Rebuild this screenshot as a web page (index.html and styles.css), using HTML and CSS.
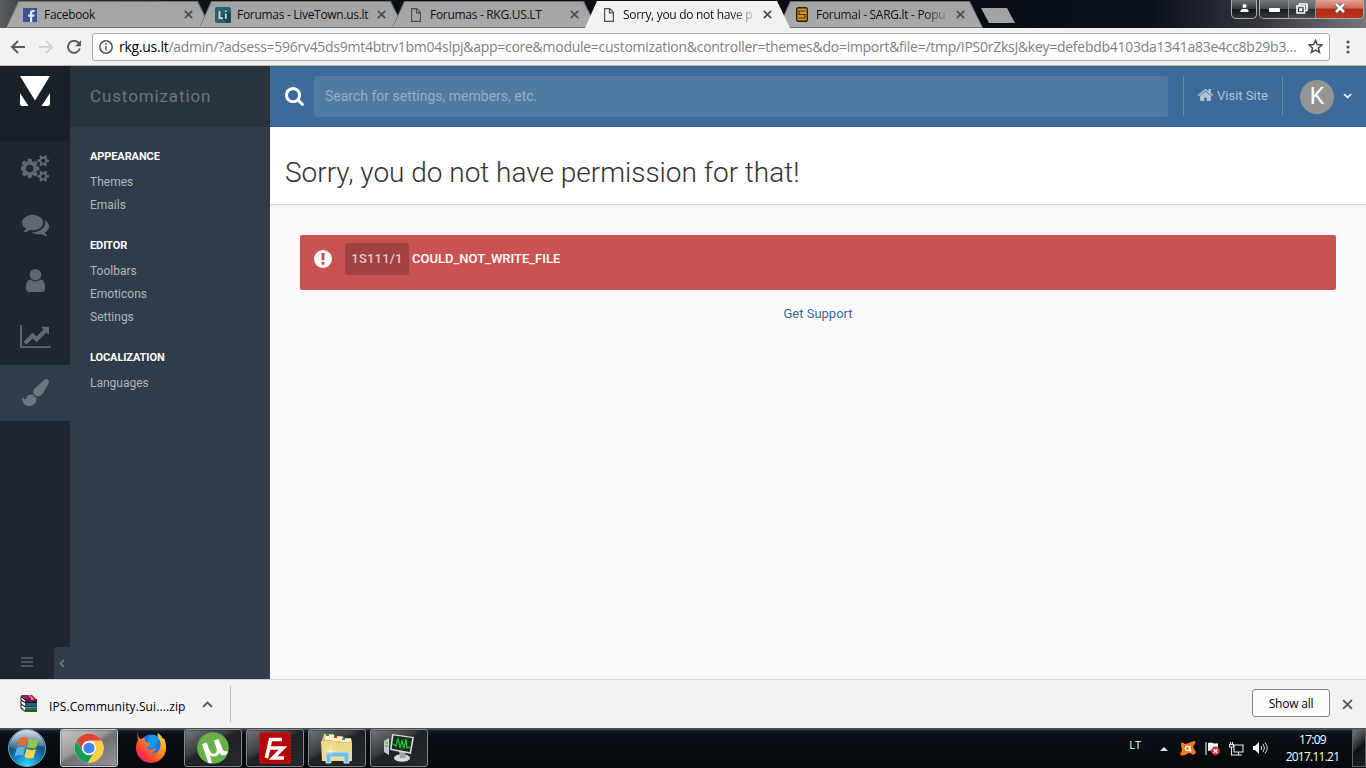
FILE: index.html
```
<!DOCTYPE html>
<html lang="en">
<head>
	<meta charset="utf-8">
	<title>Sorry, you do not have permission for that!</title>
	<link rel="stylesheet" href="styles.css">
</head>
<body>
<div class="desktop">
	<div class="tabstrip">
		<div class="tab">
			<svg class="favicon" viewBox="0 0 14 14"><rect width="14" height="14" fill="#3c5392"/><path d="M9.2 14V8.8h2l.4-2.2H9.2V5.2c0-.8.4-1.2 1.2-1.2h1.3V2h-2C7.800 2 7 3.200 7 4.800v1.800H5.200v2.200H7V14z" fill="#e8ebf2"/></svg>
			<span class="tab-title">Facebook</span>
			<svg class="close" viewBox="0 0 9 9"><path d="M.8.8l7.400 7.400M8.200.8L.8 8.200"/></svg>
		</div>
		<div class="tab">
			<svg class="favicon big" viewBox="0 0 16 16"><rect width="16" height="16" rx="2" fill="#28616d"/><path d="M4 12h4l4 4h3l1-1V7l-4-3z" fill="#194851"/><path d="M4.500 4v7.200H8M10.800 6.500v5.200M10.800 3.500v1.600" fill="none" stroke="#c9dade" stroke-width="1.800"/></svg>
			<span class="tab-title">Forumas - LiveTown.us.lt</span>
			<svg class="close" viewBox="0 0 9 9"><path d="M.8.8l7.400 7.400M8.200.8L.8 8.200"/></svg>
		</div>
		<div class="tab">
			<svg class="favicon page" viewBox="0 0 10 14"><path d="M.6.6h5.200l3.600 3.800v9H.6zM5.500.8v4h4"/></svg>
			<span class="tab-title">Forumas - RKG.US.LT</span>
			<svg class="close" viewBox="0 0 9 9"><path d="M.8.8l7.400 7.400M8.200.8L.8 8.200"/></svg>
		</div>
		<div class="tab active">
			<svg class="favicon page" viewBox="0 0 10 14"><path d="M.6.6h5.200l3.600 3.800v9H.6zM5.500.8v4h4"/></svg>
			<span class="tab-title fade">Sorry, you do not have p</span>
			<svg class="close" viewBox="0 0 9 9"><path d="M.8.8l7.400 7.400M8.200.8L.8 8.200"/></svg>
		</div>
		<div class="tab">
			<svg class="favicon sarg" viewBox="0 0 12 15"><rect x=".7" y=".7" width="10.600" height="13.600" rx="1.500" fill="#d8941c" stroke="#2a2115" stroke-width="1.400"/><path d="M9.500 4H3v3.500h6V11H2.500" fill="none" stroke="#4d3408" stroke-width="1.200"/></svg>
			<span class="tab-title fade">Forumai - SARG.lt - Popu</span>
			<svg class="close" viewBox="0 0 9 9"><path d="M.8.8l7.400 7.400M8.200.8L.8 8.200"/></svg>
		</div>
		<div class="newtab"></div>
		<div class="winbuttons">
			<div class="wb user"><svg viewBox="0 0 10 10"><circle cx="5" cy="2.800" r="2.300"/><path d="M.5 9.500V8q0-2 3-2h3q3 0 3 2v1.500z"/></svg></div>
			<div class="wb group">
				<span class="min"><i></i></span>
				<span class="max"><svg viewBox="0 0 12 11"><path d="M3.500 3V1H11v6.500H9M1 3h7.500v7H1zM4 6h1.500v1.500H4z"/></svg></span>
				<span class="x"><svg viewBox="0 0 12 10"><path class="edge" d="M2 1l8 8M10 1L2 9"/><path d="M2 1l8 8M10 1L2 9"/></svg></span>
			</div>
		</div>
	</div>

	<div class="toolbar">
		<svg class="nav back" viewBox="0 0 16 14"><path d="M15 7H2M8 1L2 7l6 6"/></svg>
		<svg class="nav forward" viewBox="0 0 16 14"><path d="M1 7h13M8 1l6 6-6 6"/></svg>
		<svg class="nav reload" viewBox="0 0 14 14"><path d="M11.800 3.200A6 6 0 1 0 12.800 8.500"/><path class="tip" d="M14 .2v6H8z"/></svg>
		<div class="address">
			<svg class="info" viewBox="0 0 14 14"><circle cx="7" cy="7" r="6.200"/><path d="M7 6v4.600M7 3.200v1.700"/></svg>
			<span class="url"><b>rkg.us.lt</b>/admin/?adsess=596rv45ds9mt4btrv1bm04slpj&amp;app=core&amp;module=customization&amp;controller=themes&amp;do=import&amp;file=/tmp/IPS0rZksJ&amp;key=defebdb4103da1341a83e4cc8b29b3...</span>
			<svg class="star" viewBox="0 0 14 14"><path d="M7 1.300l1.700 3.900 4.300.4-3.200 2.800 1 4.200L7 10.400l-3.800 2.200 1-4.200L1 5.600l4.300-.4z"/></svg>
		</div>
		<svg class="dots" viewBox="0 0 4 14"><circle cx="2" cy="2" r="1.600"/><circle cx="2" cy="7" r="1.600"/><circle cx="2" cy="12" r="1.600"/></svg>
	</div>

	<div class="app">
		<div class="rail">
			<div class="logo"><svg viewBox="0 0 30 30"><path d="M0 0h30L15 24.500zM0 17l8.500 13H2q-2 0-2-2zM30 17l-8.500 13H28q2 0 2-2z"/></svg></div>
			<a class="rail-item"><svg width="29" height="27" viewBox="0 0 1920 1792"><path d="M832 896q0-106-75-181t-181-75-181 75-75 181 75 181 181 75 181-75 75-181zm768 512q0-52-38-90t-90-38-90 38-38 90q0 53 37.500 90.500t90.500 37.500 90.500-37.500 37.500-90.500zm0-1024q0-52-38-90t-90-38-90 38-38 90q0 53 37.500 90.500t90.500 37.500 90.500-37.500 37.500-90.500zm-384 421v185q0 10-7 19.500t-16 10.500l-155 24q-11 35-32 76 34 48 90 115 7 11 7 20 0 12-7 19-23 30-82.500 89.500t-78.500 59.500q-11 0-21-7l-115-90q-37 19-77 31-11 108-23 155-7 24-30 24h-186q-11 0-20-7.500t-10-17.500l-23-153q-34-10-75-31l-118 89q-7 7-20 7-11 0-21-8-144-133-144-160 0-9 7-19 10-14 41-53t47-61q-23-44-35-82l-152-24q-10-1-17-9.500t-7-19.500v-185q0-10 7-19.500t16-10.500l155-24q11-35 32-76-34-48-90-115-7-11-7-20 0-12 7-20 22-30 82-89t79-59q11 0 21 7l115 90q34-18 77-32 11-108 23-154 7-24 30-24h186q11 0 20 7.500t10 17.500l23 153q34 10 75 31l118-89q8-7 20-7 11 0 21 8 144 133 144 160 0 8-7 19-12 16-42 54t-45 60q23 48 34 82l152 23q10 2 17 10.500t7 19.500zm640 533v140q0 16-149 31-12 27-30 52 51 113 51 138 0 4-4 7-122 71-124 71-8 0-46-47t-52-68q-20 2-30 2t-30-2q-14 21-52 68t-46 47q-2 0-124-71-4-3-4-7 0-25 51-138-18-25-30-52-149-15-149-31v-140q0-16 149-31 13-29 30-52-51-113-51-138 0-4 4-7 4-2 35-20t59-34 30-16q8 0 46 46.500t52 67.500q20-2 30-2t30 2q51-71 92-112l6-2q4 0 124 70 4 3 4 7 0 25-51 138 17 23 30 52 149 15 149 31zm0-1024v140q0 16-149 31-12 27-30 52 51 113 51 138 0 4-4 7-122 71-124 71-8 0-46-47t-52-68q-20 2-30 2t-30-2q-14 21-52 68t-46 47q-2 0-124-71-4-3-4-7 0-25 51-138-18-25-30-52-149-15-149-31v-140q0-16 149-31 13-29 30-52-51-113-51-138 0-4 4-7 4-2 35-20t59-34 30-16q8 0 46 46.500t52 67.500q20-2 30-2t30 2q51-71 92-112l6-2q4 0 124 70 4 3 4 7 0 25-51 138 17 23 30 52 149 15 149 31z"/></svg></a>
			<a class="rail-item"><svg width="27" height="27" viewBox="0 0 1792 1792"><path d="M1408 768q0 139-94 257t-256.500 186.500-353.500 68.500q-86 0-176-16-124 88-278 128-36 9-86 16h-3q-11 0-20.500-8t-11.500-21q-1-3-1-6.500t.5-6.500 2-6l2.500-5 3.500-5.500 4-5 4.500-5 4-4.500q5-6 23-25t26-29.500 22.500-29 25-38.500 20.500-44q-124-72-195-177t-71-224q0-139 94-257t256.500-186.500 353.500-68.500 353.500 68.500 256.500 186.500 94 257zm384 256q0 120-71 224.500t-195 176.500q10 24 20.500 44t25 38.500 22.500 29 26 29.500 23 25q1 1 4 4.500t4.500 5 4 5 3.500 5.500l2.500 5 2 6 .5 6.500-1 6.500q-3 14-13 22t-22 7q-50-7-86-16-154-40-278-128-90 16-176 16-271 0-472-132 58 4 88 4 161 0 309-45t264-129q125-92 192-212t67-254q0-77-23-152 129 71 204 178t75 230z"/></svg></a>
			<a class="rail-item"><svg width="27" height="27" viewBox="0 0 1792 1792"><path d="M1536 1399q0 109-62.500 187t-150.500 78h-854q-88 0-150.500-78t-62.500-187q0-85 8.500-160.500t31.500-152 58.500-131 94-89 134.500-34.500q131 128 313 128t313-128q76 0 134.500 34.500t94 89 58.500 131 31.500 152 8.500 160.500zm-256-887q0 159-112.500 271.500t-271.500 112.500-271.500-112.500-112.500-271.500 112.500-271.500 271.500-112.500 271.500 112.500 112.500 271.500z"/></svg></a>
			<a class="rail-item"><svg width="31" height="27" viewBox="0 0 2048 1792"><path d="M2048 1536v128h-2048v-1536h128v1408h1920zm-128-1248v435q0 21-19.500 29.500t-35.500-7.500l-121-121-633 633q-10 10-23 10t-23-10l-233-233-416 416-192-192 585-585q10-10 23-10t23 10l233 233 464-464-121-121q-16-16-7.500-35.500t29.500-19.500h435q14 0 23 9t9 23z"/></svg></a>
			<a class="rail-item selected"><svg width="27" height="27" viewBox="0 0 1792 1792"><path d="M1615 0q70 0 122.500 46.500t52.500 116.500q0 63-45 151-332 629-465 752-97 91-218 91-126 0-216.500-92.500t-90.500-219.500q0-128 92-212l638-579q59-54 130-54zm-909 1034q39 76 106.500 130t150.500 76l1 71q4 213-129.500 347t-348.500 134q-123 0-218-46.500t-152.500-127.500-86.500-183-29-220q7 5 41 30t62 44.500 59 36.500 46 17q41 0 55-37 25-66 57.500-112.500t69.500-76 88-47.500 103-25.500 125-10.500z"/></svg></a>
			<div class="rail-foot">
				<div class="reorder"><i></i><i></i><i></i></div>
				<div class="collapse"><svg viewBox="0 0 6 9"><path d="M5 1L1.500 4.500 5 8"/></svg></div>
			</div>
		</div>

		<div class="submenu">
			<div class="submenu-head">Customization</div>
			<h3>APPEARANCE</h3>
			<ul>
				<li><a>Themes</a></li>
				<li><a>Emails</a></li>
			</ul>
			<h3>EDITOR</h3>
			<ul>
				<li><a>Toolbars</a></li>
				<li><a>Emoticons</a></li>
				<li><a>Settings</a></li>
			</ul>
			<h3>LOCALIZATION</h3>
			<ul>
				<li><a>Languages</a></li>
			</ul>
		</div>

		<div class="main">
			<div class="header">
				<svg class="search-icon" viewBox="0 0 1664 1664"><path transform="translate(-64 -128)" d="M1216 832q0-185-131.500-316.500t-316.500-131.500-316.500 131.500-131.500 316.500 131.500 316.500 316.500 131.500 316.500-131.500 131.500-316.500zm512 832q0 52-38 90t-90 38q-54 0-90-38l-343-342q-179 124-399 124-143 0-273.500-55.500t-225-150-150-225-55.500-273.500 55.500-273.500 150-225 225-150 273.500-55.500 273.500 55.500 225 150 150 225 55.500 273.500q0 220-124 399l343 343q37 37 37 90z"/></svg>
				<div class="search-box">Search for settings, members, etc.</div>
				<a class="visit"><svg viewBox="0 0 1612 1283"><path transform="translate(-90 -253)" d="M1472 992v480q0 26-19 45t-45 19h-384v-384h-256v384h-384q-26 0-45-19t-19-45v-480q0-1 .5-3t.5-3l575-474 575 474q1 2 1 6zm223-69l-62 74q-8 9-21 11h-3q-13 0-21-7l-692-577-692 577q-12 8-24 7-13-2-21-11l-62-74q-8-10-7-23.500t11-21.500l719-599q32-26 76-26t76 26l244 204v-195q0-14 9-23t23-9h192q14 0 23 9t9 23v408l219 182q10 8 11 21.500t-7 23.500z"/></svg><span>Visit Site</span></a>
				<div class="avatar">K</div>
				<svg class="caret" viewBox="0 0 9 6"><path d="M1 1l3.500 3.500L8 1"/></svg>
			</div>
			<div class="title-bar"><h1>Sorry, you do not have permission for that!</h1></div>
			<div class="content">
				<div class="message">
					<svg class="warn" viewBox="0 0 18 18"><circle cx="9" cy="9" r="9" fill="#fff"/><path d="M7.300 3h3.400l-.4 7.500H7.700zM7.500 12h3v2.700h-3z" fill="#c95252"/></svg>
					<span class="code">1S111/1</span>
					<span class="text">COULD_NOT_WRITE_FILE</span>
				</div>
				<a class="support">Get Support</a>
			</div>
		</div>
	</div>

	<div class="downloads">
		<svg class="rar" viewBox="0 0 17 17"><path d="M1 0h11l4 4H5z" fill="#971a66"/><path d="M5 4h12v3H5z" fill="#70104f"/><path d="M5 8h12v3.500H5z" fill="#0d6793"/><path d="M5 12.500h12V16H5z" fill="#18743a"/><path d="M1 1l4 4M1 2v3l4 2.500h12M1 6v3l4 2.700h12M1 10v3l4 3.300h12" fill="none" stroke="#161616" stroke-width="1.100"/><path d="M1.500 3.500L5 6M1.500 7.500L5 10M1.500 11.500L5 14" stroke="#fff"/><path d="M10 0l4 4v1h-3V3L8 0z" fill="#c2a13b"/></svg>
		<span class="file">IPS.Community.Sui....zip</span>
		<svg class="up" viewBox="0 0 11 7"><path d="M1 6l4.500-4.500L10 6"/></svg>
		<div class="divider"></div>
		<button class="show-all">Show all</button>
		<svg class="close dl-close" viewBox="0 0 10 10"><path d="M1 1l8 8M9 1L1 9"/></svg>
	</div>

	<div class="taskbar">
		<svg class="orb" viewBox="0 0 40 40">
			<defs>
				<radialGradient id="orb" cx=".5" cy="1" r=".95"><stop offset="0" stop-color="#35e5ff"/><stop offset=".35" stop-color="#178bc7"/><stop offset=".7" stop-color="#164c78"/><stop offset="1" stop-color="#7393aa"/></radialGradient>
				<linearGradient id="shine" x2="0" y2="1"><stop offset="0" stop-color="#fff" stop-opacity=".65"/><stop offset="1" stop-color="#fff" stop-opacity=".12"/></linearGradient>
			</defs>
			<circle cx="20" cy="20" r="18.500" fill="url(#orb)" stroke="#6da3bd"/>
			<path d="M3 19a17 17 0 0 1 34 0Q28 16 20 20T3 19z" fill="url(#shine)"/>
			<path d="M12.500 10.500q4-3 8.500-.8l-2.300 8.500q-4.500-2-8.500.5z" fill="#ed6a2d"/>
			<path d="M22.300 10.600q4.500 2.500 9.500.2l-2.400 8.800q-5 2-9.400-.6z" fill="#91c64c"/>
			<path d="M9.800 20.200q4.500-2.500 8.500-.5l-2.300 8.300q-4.500-2.300-8.500.6z" fill="#55b4e8"/>
			<path d="M19.600 20.500q4.700 2.600 9.400.7l-2.500 8.600q-5 1.700-9.200-.9z" fill="#ffd34b"/>
		</svg>
		<div class="task current"><svg width="30" height="30" viewBox="0 0 30 30"><circle cx="15" cy="15" r="14.500" fill="#fff"/><path d="M2.500 7.700A14.500 14.500 0 0 1 27.600 7.800H15a7.200 7.200 0 0 0-6.900 9.200z" fill="#dc4437"/><path d="M2.500 7.700A14.500 14.500 0 0 0 14 29.500l6.500-10.200A7.200 7.200 0 0 1 8.300 17.500z" fill="#179d58"/><path d="M27.600 7.800A14.500 14.500 0 0 1 14 29.500l7-11.700a7.200 7.200 0 0 0-6-10z" fill="#ffce42"/><circle cx="15" cy="15" r="7" fill="#fff"/><circle cx="15" cy="15" r="5.600" fill="#4386f5"/></svg></div>
		<div class="task plain"><svg width="32" height="32" viewBox="0 0 32 32">
			<defs><linearGradient id="fox" x1="1" x2=".1" y2="1"><stop offset="0" stop-color="#fff44a"/><stop offset=".4" stop-color="#ff9b20"/><stop offset=".75" stop-color="#ff3c35"/><stop offset="1" stop-color="#e4168b"/></linearGradient></defs>
			<circle cx="16" cy="14" r="11.500" fill="#1677e8"/><path d="M14 4q7-3 10 3l-4 8-8 2z" fill="#1497ee"/>
			<path d="M3 2q0 3 2 5l5-1q-1 2 1 4l4 1q-1 3-4 4 2 4 7 2l3-1q-2 6-7 5 7 2 10-3 4-7-1-12-1-3 0-5 4 3 5 6l1-1q2 4 2 10a15 15 0 0 1-30 0q0-5 2-8-1-4 0-9z" fill="url(#fox)"/></svg></div>
		<div class="task"><svg width="32" height="32" viewBox="0 0 32 32"><circle cx="16" cy="16" r="15.800" fill="#68b048"/><path d="M5 12l4.500-1.500 3.200 8q1.500 4 5 3 3-1 1.800-5L17 8.500 21.500 7l4.500 11q1 2 4 1l1 1q-1 3-4 3.500-3 0-4.500-2.500-2 4-6 3.500-2 0-3.500-1.500L15 31l-3.500.3z" fill="#fff"/></svg></div>
		<div class="task"><svg width="32" height="32" viewBox="0 0 32 32"><rect x="1" y="1" width="30" height="30" fill="#b50709" stroke="#c40d0f" stroke-width="2" stroke-dasharray="2 1"/><path d="M7.500 26l4-18.500H23M9.500 16H17M15.500 16H24L14 26h11" fill="none" stroke="#fff" stroke-width="3.600"/></svg></div>
		<div class="task"><svg width="34" height="32" viewBox="0 0 34 32"><path d="M2 8l2-6h9l2 2h7l2 2h7l1 4v18H2z" fill="#dfc16a"/><path d="M5 3h9v5H5zM13 5h10v4H13zM21 7h10v3H21z" fill="#fff5d2"/><path d="M6 2h3v2H6z" fill="#0aab20"/><path d="M14 4h3v2h-3z" fill="#d82f24"/><path d="M22 6h3v2h-3z" fill="#258ed5"/><path d="M1 9h14l2 2h15v18H2z" fill="#f2d985"/><path d="M6 31V20h23v11h-5v-6H11v6z" fill="#77bfe2" stroke="#c4ebfb"/><path d="M10 14v10M5 19h10M7 16l6 6M13 16l-6 6" stroke="#fff" stroke-opacity=".5"/></svg></div>
		<div class="task"><svg width="32" height="32" viewBox="0 0 32 32"><path d="M1 9l5-3v17l-5-3z" fill="#c5cac9"/><path d="M2 11h3M2 14h3" stroke="#3ba53f"/><ellipse cx="19" cy="26" rx="8" ry="3.800" fill="#d8dada"/><path d="M16 19h6l1 7h-6z" fill="#9fa5a5"/><path d="M9 2l22 3-3 17-21-4z" fill="#d7dada"/><path d="M10.500 3.500l18.700 2.600-2.500 14-18-3.300z" fill="#152b1b"/><path d="M10 12l3 2 2-8 2 10 2-7 2 7 2-9 1 9 3-1" fill="none" stroke="#1dd83b" stroke-width="1.200"/><path d="M10 8l18 2M9.500 12l18 2M15 4l-2 13M21 5l-2 14" stroke="#267b39" stroke-width=".5"/></svg></div>

		<div class="tray">
			<span class="lang">LT</span>
			<svg class="tray-up" viewBox="0 0 8 4"><path d="M4 0l4 4H0z" fill="#dce4ea"/></svg>
			<svg class="avast" viewBox="0 0 16 15"><path d="M1 2q2-1 4 1l4-1q3-2 6-2 1 1 0 2.500-2 2-1.500 4.500l2.500 4q-1 3-3 3-2-2-4.500-2Q5 14.500 3 14.500q-3 0-3-2 2-2 2-4Q1 5 1 2z" fill="#fa7918"/><circle cx="7.500" cy="7.500" r="2.100" fill="none" stroke="#fff" stroke-width="1.300"/><path d="M10 5v5h1.500" fill="none" stroke="#fff" stroke-width="1.200"/></svg>
			<svg class="flag" viewBox="0 0 15 15"><path d="M1 1v13" stroke="#ddd" stroke-width="1.200"/><path d="M3 2q3-1 5 0t5 0v8q-3 1-5 0t-5 0z" fill="#f1f1f1"/><circle cx="10.500" cy="10" r="4.400" fill="#d73232"/><path d="M8.700 8.200l3.600 3.600M12.300 8.200l-3.600 3.600" stroke="#fff" stroke-width="1.400"/></svg>
			<svg class="net" viewBox="0 0 15 14"><path d="M5 3h9v7H5zM9.500 10v3M6 13h7M.5 2.500h4V5h-4zM1.500 0v2M3.500 0v2M2.500 5v8H6" fill="none" stroke="#e8e8e8" stroke-width="1.100"/></svg>
			<svg class="sound" viewBox="0 0 15 14"><path d="M0 5h2l4-4v12L2 9H0z" fill="#f5f5f5"/><path d="M8 5q1.500 2 0 4M10 3q3 4 0 8M12 1.500q4.500 5.500 0 11" fill="none" stroke="#ddd"/></svg>
			<div class="clock"><span>17:09</span><span>2017.11.21</span></div>
			<div class="peek"></div>
		</div>
	</div>
</div>
</body>
</html>
```
FILE: styles.css
```
body, div, h1, h3, ul, li, a, span, button{
	padding: 0; margin: 0;
	box-sizing: border-box;
}
body{
	background: #000;
	font: 12px/1.5 "Roboto", sans-serif;
	overflow: hidden;
}
svg{
	display: block;
	flex: none;
}
.desktop{
	width: 1366px;
	height: 768px;
	display: grid;
	grid-template-columns: minmax(0, 1fr);
	grid-template-rows: 28px 38px 613px 49px 40px;
}

/* tabs */
.tabstrip{
	display: flex;
	padding-left: 6px;
	background: linear-gradient(90deg, #5b5e60 0, #33373b 30px, #0c1017 210px, #080d14 960px, #0b1118 1150px, #33373c 1260px, #75797d 1366px);
	font-family: "Open Sans", sans-serif;
}
.tab{
	position: relative;
	z-index: 1;
	flex: none;
	width: 205px;
	height: 27px;
	margin: 1px -12px 0 0;
	padding: 0 16px 0 17px;
	display: flex;
	align-items: center;
	background: #6f7173;
	clip-path: polygon(0 100%, 12px 0, 192px 0, 100% 100%);
}
.tab::before{
	content: "";
	position: absolute;
	z-index: -1;
	inset: 0;
	background: linear-gradient(#a2a2a3, #a9aaac);
	clip-path: polygon(1px calc(100% - 1px), 13px 1px, 191px 1px, calc(100% - 1px) calc(100% - 1px));
}
.tab.active{
	z-index: 2;
}
.tab.active, .tab.active::before{
	background: #f2f2f2;
}
.favicon{
	width: 14px;
	height: 14px;
}
.favicon.big{
	width: 16px;
	height: 16px;
	margin: 0 -1px 0 -1px;
}
.favicon.page{
	width: 10px;
	margin: 0 2px 0 2px;
	fill: none;
	stroke: #4d4d4d;
	stroke-width: 1.2;
}
.favicon.sarg{
	width: 12px;
	height: 15px;
	margin: 0 1px;
}
.tab-title{
	flex: 1;
	margin: 0 5px 0 7px;
	white-space: nowrap;
	color: #111;
	font-size: 12px;
	letter-spacing: -.3px;
}
.tab-title.fade{
	-webkit-mask-image: linear-gradient(90deg, #000 108px, transparent 136px);
	mask-image: linear-gradient(90deg, #000 108px, transparent 136px);
}
.close{
	width: 9px;
	height: 9px;
	fill: none;
	stroke: #4c4c4c;
	stroke-width: 1.7;
}
.tab .close{
	margin-right: 2px;
}
.newtab{
	width: 34px;
	height: 15px;
	margin: 8px 0 0 10px;
	background: #a2a3a5;
	clip-path: polygon(0 0, 26px 0, 100% 100%, 8px 100%);
}
.winbuttons{
	display: flex;
	gap: 2px;
	height: 19px;
	margin: 0 2px 0 auto;
}
.wb{
	border: 1px solid #aaaeb2;
	border-top: 0;
	border-radius: 0 0 5px 5px;
	background: linear-gradient(#6c7075, #34383d 50%, #101318 50%, #33373c);
	overflow: hidden;
}
.wb.user{
	width: 26px;
	display: flex;
	justify-content: center;
	padding-top: 3px;
}
.wb.user svg{
	width: 9px;
	height: 10px;
	fill: #fff;
}
.wb.group{
	display: flex;
	width: 105px;
}
.wb.group span{
	display: flex;
	align-items: center;
	justify-content: center;
	width: 29px;
	border-right: 1px solid #8e9296;
	padding-bottom: 2px;
}
.wb.group .min{
	background: linear-gradient(#73777a, #494d51 50%, #171a1e 50%, #35393e);
	align-items: flex-end;
	padding-bottom: 6px;
}
.min i{
	width: 11px;
	height: 4px;
	background: #fff;
	border-radius: 1px;
}
.wb.group .max{
	width: 27px;
	background: linear-gradient(#7d8083, #595c60 50%, #24272b 50%, #4a4e53);
}
.max svg{
	width: 12px;
	height: 11px;
	fill: none;
	stroke: #fff;
	stroke-width: 1.6;
}
.wb.group .x{
	flex: 1;
	border: 0;
	background: linear-gradient(#e3a495, #cf6b55 45%, #b32a15 50%, #bc3520);
}
.x svg{
	width: 12px;
	height: 10px;
	stroke: #fff;
	stroke-width: 2.6;
}
.x .edge{
	stroke: #5b4b50;
	stroke-width: 4.4;
}

/* address row */
.toolbar{
	display: flex;
	align-items: center;
	background: #f2f2f2;
	border-bottom: 1px solid #b6b4b6;
	padding: 0 16px 0 10px;
}
.nav{
	width: 16px;
	height: 14px;
	fill: none;
	stroke: #5a5a5a;
	stroke-width: 1.9;
}
.forward{
	margin-left: 12px;
	stroke: #d2d2d2;
}
.reload{
	width: 14px;
	margin-left: 13px;
}
.reload .tip{
	fill: #5a5a5a;
	stroke: none;
}
.address{
	display: flex;
	align-items: center;
	flex: none;
	width: 1238px;
	height: 28px;
	margin-left: 11px;
	padding: 0 6px;
	border: 1px solid #aaa;
	border-radius: 3px;
	background: #fff;
	font: 14px/26px "Open Sans", sans-serif;
}
.info{
	width: 14px;
	height: 14px;
	fill: none;
	stroke: #555;
	stroke-width: 1.5;
}
.url{
	width: 1190px;
	margin-left: 6px;
	color: #808080;
	white-space: nowrap;
	letter-spacing: -.272px;
}
.url b{
	font-weight: 400;
	color: #000;
}
.star{
	width: 15px;
	height: 15px;
	fill: none;
	stroke: #4c4c4c;
	stroke-width: 1.4;
}
.dots{
	width: 4px;
	height: 14px;
	margin-left: auto;
	fill: #555;
}

/* admin area */
.app{
	display: grid;
	grid-template-columns: 70px 200px minmax(0, 1fr);
}
.rail{
	display: flex;
	flex-direction: column;
	background: #1e272f;
}
.logo{
	height: 75px;
	padding: 10px 20px;
	background: #1a2028;
}
.logo svg{
	width: 30px;
	height: 30px;
	fill: #fff;
}
.rail-item{
	display: flex;
	align-items: center;
	justify-content: center;
	height: 56px;
	padding-bottom: 1px;
	fill: #62686e;
}
.rail-item.selected{
	background: #303c49;
	fill: #6e7780;
}
.rail-foot{
	display: flex;
	justify-content: space-between;
	height: 32px;
	margin-top: auto;
}
.reorder{
	display: grid;
	gap: 2px;
	align-content: center;
	padding: 0 0 2px 21px;
}
.reorder i{
	width: 12px;
	height: 2px;
	background: #4b5259;
}
.collapse{
	display: flex;
	align-items: center;
	justify-content: center;
	width: 16px;
	background: #303c49;
	border-radius: 3px 0 0 0;
}
.collapse svg{
	width: 6px;
	height: 9px;
	fill: none;
	stroke: #78818a;
	stroke-width: 1.5;
}
.submenu{
	background: #303c49;
	color: #b0b6bc;
}
.submenu-head{
	height: 62px;
	padding-left: 20px;
	background: linear-gradient(#28343c 61px, #303c49 61px);
	color: #6c757c;
	font-size: 17px;
	line-height: 60px;
	letter-spacing: .88px;
}
.submenu h3{
	margin: 18px 20px 3px;
	color: #fff;
	font-size: 11px;
	font-weight: 700;
	line-height: 22px;
	letter-spacing: -.1px;
}
.submenu ul{
	list-style-type: none;
	padding-left: 20px;
}
.submenu li{
	line-height: 23px;
}
.main{
	display: flex;
	flex-direction: column;
	background: #fafafa;
}
.header{
	display: flex;
	height: 61px;
	padding: 10px 15px 9px;
	background: #3c6b99;
	border-bottom: 1px solid #376189;
}
.search-icon{
	width: 19px;
	height: 19px;
	margin: 11px 10px 0 0;
	fill: #fff;
}
.search-box{
	flex: none;
	width: 854px;
	height: 41px;
	padding-left: 11px;
	border-radius: 3px;
	background: #507aa1;
	color: #97b0c9;
	font-size: 14px;
	line-height: 40px;
}
.visit{
	display: flex;
	align-items: center;
	flex: none;
	width: 100px;
	height: 40px;
	margin-left: 15px;
	padding-left: 14px;
	border: solid #6288ad;
	border-width: 0 1px;
	color: #b1c4d6;
	font-size: 13px;
}
.visit svg{
	width: 15px;
	height: 12px;
	margin: 0 4px 3px 0;
	fill: #b1c4d6;
}
.avatar{
	flex: none;
	width: 34px;
	height: 34px;
	margin: 4px 9px 0 17px;
	border-radius: 50%;
	background: #949494;
	color: #fff;
	font-size: 23px;
	line-height: 34px;
	text-align: center;
}
.caret{
	width: 9px;
	height: 6px;
	margin-top: 17px;
	fill: none;
	stroke: #fff;
	stroke-width: 1.6;
}
.title-bar{
	height: 78px;
	padding-left: 15px;
	background: #fff;
	border-bottom: 1px solid #d5d5d5;
	box-shadow: 0 2px 4px rgba(0,0,0,.06);
}
.title-bar h1{
	color: #323232;
	font-size: 28px;
	font-weight: 300;
	line-height: 92px;
	height: 77px;
	letter-spacing: -.02px;
}
.content{
	display: flex;
	flex-direction: column;
	padding: 30px;
}
.message{
	display: flex;
	height: 55px;
	padding: 8px 14px;
	border-radius: 2px;
	background: #c95252;
	color: #fff;
	font-size: 13px;
	font-weight: 500;
	line-height: 32px;
}
.warn{
	width: 18px;
	height: 18px;
	margin-top: 7px;
}
.code{
	width: 64px;
	height: 32px;
	margin: 0 3px 0 13px;
	border-radius: 3px;
	background: #a14242;
	color: #e4caca;
	text-align: center;
	letter-spacing: .2px;
}
.support{
	align-self: center;
	margin-top: 14px;
	color: #3c6994;
	font-size: 13px;
}

/* download shelf */
.downloads{
	display: flex;
	align-items: center;
	background: #f2f2f2;
	border-top: 1px solid #d2d2d2;
	padding: 0 13px 0 20px;
	font-family: "Open Sans", sans-serif;
}
.rar{
	width: 17px;
	height: 17px;
	margin-bottom: 2px;
}
.file{
	width: 140px;
	margin: 5px 0 0 12px;
	font-size: 12px;
	white-space: nowrap;
	letter-spacing: .1px;
}
.up{
	width: 11px;
	height: 7px;
	margin-left: 13px;
	fill: none;
	stroke: #5a5a5a;
	stroke-width: 1.8;
}
.divider{
	width: 1px;
	height: 36px;
	margin-left: 17px;
	background: #bdbdbd;
}
.show-all{
	width: 78px;
	height: 28px;
	margin: 0 12px 2px auto;
	border: 1px solid #858585;
	border-radius: 3px;
	background: #fcfcfc;
	color: #000;
	font: 12px "Open Sans", sans-serif;
	letter-spacing: -.2px;
}
.dl-close{
	width: 11px;
	height: 11px;
	stroke: #5a5a5a;
}

/* taskbar */
.taskbar{
	display: flex;
	align-items: center;
	gap: 4px;
	padding-left: 7px;
	background: linear-gradient(#242e37 0, #67727a 1px, #1d252d 2px, #0a0f15 6px, #06090d);
	font-family: "Open Sans", sans-serif;
}
.orb{
	width: 40px;
	height: 40px;
	margin-right: 9px;
}
.task{
	display: flex;
	align-items: center;
	justify-content: center;
	width: 58px;
	height: 38px;
	border: 1px solid #858a8e;
	border-radius: 3px;
	background: linear-gradient(150deg, #73777a 0, #3b4044 38%, #1e2226 48%, #26292c 100%);
	box-shadow: inset 0 0 0 1px rgba(0,0,0,.2);
}
.task.current{
	border-color: #d0d1d2;
	background: linear-gradient(150deg, #c8c8c9 0, #98999a 42%, #707172 50%, #949596 100%);
}
.task.plain{
	border-color: transparent;
	background: none;
	box-shadow: none;
}
.tray{
	display: flex;
	align-items: center;
	height: 40px;
	margin-left: auto;
	color: #fff;
}
.lang{
	font-size: 11px;
	margin: -5px 19px 0 0;
}
.tray-up{
	width: 8px;
	height: 4px;
	margin: 1px 12px 0 0;
}
.avast{
	width: 16px;
	height: 15px;
	margin-right: 9px;
}
.flag{
	width: 15px;
	height: 15px;
	margin: 1px 9px 0 0;
}
.net{
	width: 15px;
	height: 14px;
	margin: 1px 9px 0 0;
}
.sound{
	width: 15px;
	height: 14px;
}
.clock{
	display: flex;
	flex-direction: column;
	align-items: center;
	width: 84px;
	padding-left: 5px;
	font-size: 12px;
	line-height: 17px;
	letter-spacing: -.75px;
}
.peek{
	width: 14px;
	height: 38px;
	border: 1px solid #5c6165;
	background: linear-gradient(135deg, #777b7e, #23272b 45%, #0e1114 50%, #1d2124);
}
```
